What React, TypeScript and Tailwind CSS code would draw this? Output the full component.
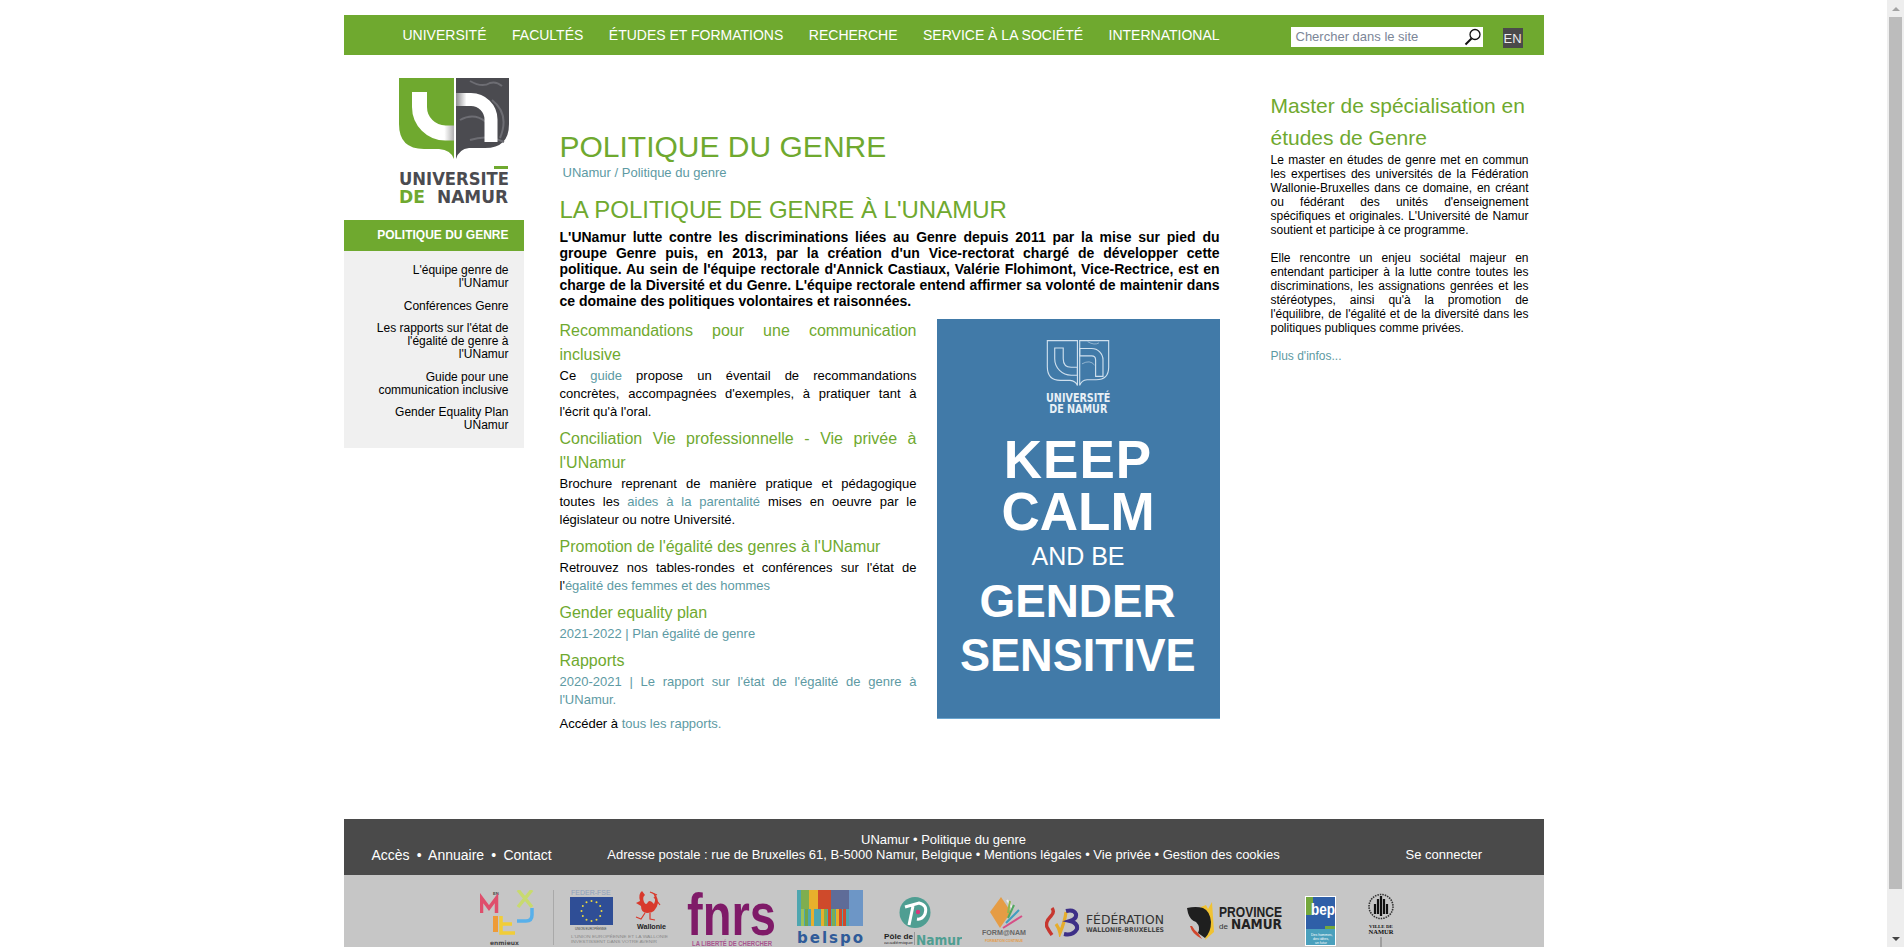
const navItems = ['UNIVERSITÉ', 'FACULTÉS', 'ÉTUDES ET FORMATIONS', 'RECHERCHE', 'SERVICE À LA SOCIÉTÉ', 'INTERNATIONAL']

const sideItems = [
  "L'équipe genre de l'UNamur",
  'Conférences Genre',
  "Les rapports sur l'état de l'égalité de genre à l'UNamur",
  'Guide pour une communication inclusive',
  'Gender Equality Plan UNamur',
]

function Heading({ children }: { children: React.ReactNode }) {
  return <h3 className="text-[16px] leading-[24px] text-[#6fa92f] text-justify">{children}</h3>
}

function Para({ children }: { children: React.ReactNode }) {
  return <p className="text-[13px] leading-[18px] text-black text-justify mb-[6px]">{children}</p>
}

function Link({ children }: { children: React.ReactNode }) {
  return <a className="text-[#5d9aa3]">{children}</a>
}

function UnamurLogo() {
  return (
    <svg width="112" height="127" viewBox="0 0 112 127" className="block">
      <defs>
        <linearGradient id="uFade" x1="0" x2="1" y1="0" y2="0">
          <stop offset="0.72" stopColor="#ffffff" />
          <stop offset="1" stopColor="#b0b0b0" />
        </linearGradient>
        <linearGradient id="nFade" x1="0" x2="1" y1="0" y2="0">
          <stop offset="0" stopColor="#8d8d90" />
          <stop offset="0.3" stopColor="#ffffff" />
        </linearGradient>
      </defs>
      <path d="M1 0H56V81Q53 72 41 71H26Q1 71 1 46Z" fill="#6fa92f" />
      <path d="M58 0H111V46Q111 70 87 70H71Q61 71 58 81Z" fill="#4b4b50" />
      <path d="M72 3Q84 10 92 5Q98 3 104 8M62 42Q76 34 88 44M94 22Q112 36 102 60M72 62Q90 56 106 64" fill="none" stroke="#6d6d73" strokeWidth="2" />
      <path d="M21.5 14V29A26 26 0 0 0 47.5 55H56" fill="none" stroke="url(#uFade)" strokeWidth="15" />
      <path d="M58 21.5H73A20 20 0 0 1 93 41.5V64" fill="none" stroke="url(#nFade)" strokeWidth="13" />
      <rect x="96" y="88" width="14" height="3" fill="#6fa92f" />
      <text x="1" y="107" fontFamily="DejaVu Sans" fontWeight="700" fontSize="17" fill="#4b4b50" textLength="110" lengthAdjust="spacingAndGlyphs">UNIVERSITE</text>
      <text x="1" y="125" fontFamily="DejaVu Sans" fontWeight="700" fontSize="17" fill="#6fa92f" textLength="26" lengthAdjust="spacingAndGlyphs">DE</text>
      <text x="39" y="125" fontFamily="DejaVu Sans" fontWeight="700" fontSize="17" fill="#4b4b50" textLength="71" lengthAdjust="spacingAndGlyphs">NAMUR</text>
    </svg>
  )
}

function Poster() {
  return (
    <div className="w-[283px] h-[400px] shrink-0 bg-[#417aa8] border-b border-[#6aa5cf] flex flex-col items-center text-white overflow-hidden">
      <svg width="66" height="46" viewBox="0 0 110 81" className="mt-[21px] block" fill="none" stroke="#cfe0ee" strokeWidth="2">
        <path d="M1 1H54V80Q51 72 41 71H24Q1 71 1 47Z" />
        <path d="M58 1H109V48Q109 70 87 70H71Q61 71 58 80Z" />
        <path d="M14 14V33A29 29 0 0 0 43 62H54V48H43Q29 48 29 33V14Z" />
        <path d="M58 15H79A20 20 0 0 1 99 35V64H86V35Q86 28 79 28H58Z" />
        <path d="M72 3Q84 10 92 5M62 42Q76 34 84 44" strokeWidth="1" />
      </svg>
      <div className="mt-[7px] text-[12px] leading-[11px] font-bold text-center font-['DejaVu_Sans'] scale-x-[0.8] text-[#e8f0f6]">
        UNIVERSITÉ
        <br />
        DE NAMUR
      </div>
      <div className="mt-[17px] text-[53px] leading-[55px] font-bold tracking-[1px]">KEEP</div>
      <div className="text-[53px] leading-[55px] -mt-[3px] font-bold">CALM</div>
      <div className="text-[25px] leading-[29px] mt-[3px]">AND BE</div>
      <div className="text-[47px] leading-[54px] mt-[3px] font-bold scale-x-[0.975]">GENDER</div>
      <div className="text-[47px] leading-[54px] font-bold scale-x-[0.96] whitespace-nowrap">SENSITIVE</div>
    </div>
  )
}

function MixLogo() {
  return (
    <svg width="56" height="56" viewBox="0 0 56 56" className="block">
      <text x="13" y="5" fontSize="4" fontWeight="700" fill="#444" fontFamily="Liberation Sans">EN</text>
      <path d="M1.5 23V8L9 18L16.5 8V23" fill="none" stroke="#df4f6c" strokeWidth="3.5" />
      <path d="M38 0L52 17M52 0L38 17" stroke="#c8da6e" strokeWidth="3.5" />
      <path d="M37 31H46Q52 31 52 25V18" fill="none" stroke="#58b0ea" strokeWidth="3.5" />
      <rect x="13" y="26" width="5" height="16" fill="#ee9b37" />
      <path d="M21 26V43H35M21 34H32" fill="none" stroke="#f1cd38" strokeWidth="3.5" />
      <text x="10" y="55" fontSize="6" fontWeight="700" fill="#444" fontFamily="DejaVu Sans">enmieux</text>
    </svg>
  )
}

function EuWallonie() {
  const stars = [0, 30, 60, 90, 120, 150, 180, 210, 240, 270, 300, 330]
  return (
    <svg width="99" height="56" viewBox="0 0 99 56" className="block">
      <text x="1" y="6" fontSize="7" fill="#8ea0bb" fontFamily="Liberation Sans">FEDER-FSE</text>
      <rect x="0" y="8" width="43" height="28" fill="#2f4e96" />
      {stars.map(a => (
        <circle
          key={a}
          cx={21.5 + 10 * Math.cos((a * Math.PI) / 180)}
          cy={22 + 10 * Math.sin((a * Math.PI) / 180)}
          r="1"
          fill="#ecd93f"
        />
      ))}
      <text x="5" y="41" fontSize="3" fill="#444" fontFamily="Liberation Sans">UNION EUROPÉENNE</text>
      <path d="M72 2Q68 5 70 12L66 14L71 17Q71 24 77 24Q86 24 88 14Q88 6 82 3Q87 9 84 15Q80 10 78 13Q76 17 74 13Q72 8 75 6Z" fill="#d8392c" />
      <path d="M75 24L71 30L66 28M80 24L80 30L85 31M84 8L90 16M80 3L87 6" fill="none" stroke="#d8392c" strokeWidth="1.2" />
      <text x="67" y="40" fontSize="7" fontWeight="700" fill="#222" fontFamily="Liberation Sans" textLength="29" lengthAdjust="spacingAndGlyphs">Wallonie</text>
      <text x="1" y="49" fontSize="3.7" fill="#8a8a8a" fontFamily="Liberation Sans" textLength="97" lengthAdjust="spacingAndGlyphs">L'UNION EUROPÉENNE ET LA WALLONIE</text>
      <text x="1" y="54" fontSize="3.7" fill="#8a8a8a" fontFamily="Liberation Sans" textLength="86" lengthAdjust="spacingAndGlyphs">INVESTISSENT DANS VOTRE AVENIR</text>
    </svg>
  )
}

function FnrsLogo() {
  return (
    <svg width="90" height="58" viewBox="0 0 90 58" className="block">
      <text x="0" y="46" fontSize="60" fontWeight="700" fill="#7f1a68" fontFamily="Liberation Sans" textLength="89" lengthAdjust="spacingAndGlyphs">fnrs</text>
      <text x="5" y="57" fontSize="6.5" fontWeight="700" fill="#a8558f" fontFamily="Liberation Sans" textLength="80" lengthAdjust="spacingAndGlyphs">LA LIBERTÉ DE CHERCHER</text>
    </svg>
  )
}

function BelspoLogo() {
  const stripes = [
    [4, '#9cc25a'], [8, '#6fa64a'], [14, '#e8b02c'], [19, '#4ea6b0'], [24, '#e8b02c'], [27, '#7fae4f'], [31, '#cf4a2b'], [35, '#7fae4f'], [39, '#e8b02c'], [42, '#cf4a2b'], [46, '#cf4a2b'],
  ] as const
  return (
    <svg width="66" height="56" viewBox="0 0 66 56" className="block">
      <rect x="0" y="0" width="4" height="36" fill="#4ea6b0" />
      <rect x="4" y="0" width="8" height="36" fill="#7fae4f" />
      <rect x="12" y="0" width="9" height="36" fill="#e8b02c" />
      <rect x="21" y="0" width="13" height="36" fill="#cf4a2b" />
      <rect x="34" y="0" width="18" height="36" fill="#5f6c98" />
      <rect x="52" y="0" width="14" height="36" fill="#6d96c6" />
      <rect x="4" y="19" width="48" height="17" fill="#4ea6b0" />
      {stripes.map(([x, color]) => (
        <rect key={x} x={x} y="19" width="3" height="17" fill={color} />
      ))}
      <text x="0" y="53" fontSize="15" fontWeight="700" fill="#2f5b99" fontFamily="DejaVu Sans" textLength="66" lengthAdjust="spacing">belspo</text>
    </svg>
  )
}

function PoleLogo() {
  return (
    <svg width="78" height="50" viewBox="0 0 78 50" className="block">
      <circle cx="31" cy="15.5" r="15.5" fill="#4f9e92" />
      <path d="M21 10L35 6Q44 8 41 17Q38 23 33 22M29 9L25 28" fill="none" stroke="#fff" strokeWidth="3" />
      <circle cx="34" cy="15" r="2.2" fill="#d8387c" />
      <text x="0" y="42" fontSize="7" fontWeight="700" fill="#222" fontFamily="Liberation Sans" textLength="29" lengthAdjust="spacingAndGlyphs">Pôle de</text>
      <text x="0" y="47" fontSize="3.6" fill="#333" fontFamily="Liberation Sans" textLength="29" lengthAdjust="spacingAndGlyphs">académique</text>
      <rect x="30" y="35" width="0.6" height="13" fill="#777" />
      <text x="32" y="48" fontSize="14" fontWeight="700" fill="#4f9e92" fontFamily="DejaVu Sans" textLength="46" lengthAdjust="spacingAndGlyphs">Namur</text>
    </svg>
  )
}

function FormanamLogo() {
  return (
    <svg width="44" height="47" viewBox="0 0 44 47" className="block">
      <path d="M19 0L29 15L18 31L8 15Z" fill="#e59c45" />
      <path d="M25 3L31 12" stroke="#eeeeee" strokeWidth="2" />
      <path d="M28 4L26 16" stroke="#8fb84d" strokeWidth="2" />
      <path d="M32 8L26 21" stroke="#50a860" strokeWidth="2" />
      <path d="M37 13L24 26" stroke="#3f9ec0" strokeWidth="2" />
      <path d="M40 19L21 31" stroke="#d64f86" strokeWidth="2" />
      <text x="0" y="38" fontSize="6.5" fontWeight="700" fill="#666" fontFamily="Liberation Sans" textLength="44" lengthAdjust="spacingAndGlyphs">FORM@NAM</text>
      <text x="3" y="45" fontSize="3.5" fontWeight="700" fill="#e59c45" fontFamily="Liberation Sans" textLength="38" lengthAdjust="spacingAndGlyphs">FORMATION CONTINUE</text>
    </svg>
  )
}

function FederationLogo() {
  return (
    <svg width="120" height="32" viewBox="0 0 120 32" className="block">
      <path d="M7 3Q10 7 6 11Q0 17 2 22Q4 26 7 30" fill="none" stroke="#c7372f" strokeWidth="3.4" />
      <path d="M11 19Q14 23 15 28Q20 16 21 7" fill="none" stroke="#e6ad2b" strokeWidth="3.2" />
      <path d="M21 6Q29 4 31 9Q32 14 25 16Q33 18 32 24Q28 31 19 29" fill="none" stroke="#3d2f87" strokeWidth="4" />
      <text x="41" y="19" fontSize="12" fill="#333" fontFamily="DejaVu Sans" textLength="78" lengthAdjust="spacingAndGlyphs">FÉDÉRATION</text>
      <text x="41" y="27" fontSize="6.5" fontWeight="700" fill="#444" fontFamily="DejaVu Sans" textLength="78" lengthAdjust="spacingAndGlyphs">WALLONIE-BRUXELLES</text>
    </svg>
  )
}

function ProvinceLogo() {
  return (
    <svg width="97" height="42" viewBox="0 0 97 42" className="block">
      <path d="M12 2L15 7L20 5L22 9L26 2L28 32L19 40L23 22Z" fill="#f0c232" />
      <path d="M1 8Q10 6 17 8Q24 11 25 22Q25 32 19 38L12 33Q15 27 10 22Q4 20 2 13Z" fill="#1f1f1f" />
      <path d="M4 26Q6 34 16 39L12 33Q8 30 6 26Z" fill="#d1462c" />
      <text x="33" y="17" fontSize="14" fontWeight="700" fill="#222" fontFamily="Liberation Sans" textLength="63" lengthAdjust="spacingAndGlyphs">PROVINCE</text>
      <text x="33" y="29" fontSize="8" fill="#333" fontFamily="Liberation Sans">de</text>
      <text x="45" y="29" fontSize="14" fontWeight="700" fill="#222" fontFamily="DejaVu Sans" textLength="51" lengthAdjust="spacingAndGlyphs">NAMUR</text>
    </svg>
  )
}

function BepLogo() {
  return (
    <svg width="31" height="50" viewBox="0 0 31 50" className="block">
      <rect width="31" height="50" fill="#fff" />
      <rect x="1" y="1" width="29" height="18" fill="#2f5fa8" />
      <rect x="1" y="1" width="7" height="18" fill="#74a83c" />
      <rect x="1" y="19" width="29" height="14" fill="#2f5fa8" />
      <rect x="20" y="30" width="10" height="3" fill="#74a83c" />
      <rect x="1" y="33" width="29" height="16" fill="#4aa0bd" />
      <text x="6" y="19" fontSize="17" fontWeight="700" fill="#fff" fontFamily="Liberation Sans" textLength="24" lengthAdjust="spacingAndGlyphs">bep</text>
      <text x="6" y="40" fontSize="3.5" fill="#fff" fontFamily="Liberation Sans">Des hommes,</text>
      <text x="8" y="44" fontSize="3.5" fill="#fff" fontFamily="Liberation Sans">des idées,</text>
      <text x="10" y="48" fontSize="3.5" fill="#fff" fontFamily="Liberation Sans">un futur</text>
    </svg>
  )
}

function VilleLogo() {
  return (
    <svg width="28" height="54" viewBox="0 0 28 54" className="block">
      <circle cx="14" cy="13.5" r="12" fill="none" stroke="#333" strokeWidth="1.6" strokeDasharray="1.5 1" />
      <path d="M8 21V11M11 21V6M14 23V3M17 21V6M20 21V11" stroke="#111" strokeWidth="2.2" />
      <text x="14" y="35" textAnchor="middle" fontSize="5" fontWeight="700" fontFamily="Liberation Serif" fill="#111">VILLE DE</text>
      <text x="14" y="41" textAnchor="middle" fontSize="6.5" fontWeight="700" fontFamily="Liberation Serif" fill="#111">NAMUR</text>
      <path d="M14 44V54" stroke="#777" strokeWidth="1" />
    </svg>
  )
}

export default function App() {
  return (
    <div className="h-[947px] flex overflow-hidden bg-white font-['Liberation_Sans',Arial,sans-serif]">
      <div className="flex-1 min-w-0 pt-[15px]">
        <div className="w-[1200px] mx-auto">
          {/* Top nav */}
          <div className="h-[40px] bg-[#6fa92f] flex items-center text-white">
            <div className="flex gap-[25.5px] pl-[59px] text-[14px] leading-[40px] flex-1">
              {navItems.map(item => (
                <a key={item}>{item}</a>
              ))}
            </div>
            <div className="w-[192px] h-[20px] mt-[4px] bg-white flex items-center justify-between pl-[5px] pr-[1px] text-[13px] text-[#7c8698]">
              <span>Chercher dans le site</span>
              <svg width="18" height="18" viewBox="0 0 18 18" fill="none" stroke="#111">
                <circle cx="11" cy="6.5" r="5" strokeWidth="1.3" />
                <path d="M7.5 10.5L1.5 16.5" strokeWidth="2" />
              </svg>
            </div>
            <div className="ml-[20px] mr-[21px] w-[20px] h-[20px] mt-[6px] bg-[#4a4a4a] text-[#eeeeee] text-[13px] leading-[21px] text-center">EN</div>
          </div>

          <div className="flex">
            {/* Left sidebar */}
            <div className="w-[180px] shrink-0 pt-[23px]">
              <div className="pl-[54px]">
                <UnamurLogo />
              </div>
              <div className="mt-[15px] h-[31px] bg-[#6fa92f] text-white text-[12px] font-bold leading-[30px] text-right pr-[15px]">POLITIQUE DU GENRE</div>
              <div className="bg-[#f0f0f0] h-[197px] pt-[13px] pr-[15px] pl-[30px] text-right text-[12px] leading-[13px] text-black flex flex-col gap-[9.5px]">
                {sideItems.map(item => (
                  <a key={item} className="block">{item}</a>
                ))}
              </div>
            </div>

            {/* Main column */}
            <div className="w-[660px] shrink-0 ml-[36px] pt-[74px]">
              <h1 className="text-[30px] leading-[36px] text-[#6fa92f]">POLITIQUE DU GENRE</h1>
              <div className="pl-[3px] text-[13px] leading-[15px] text-[#5d9aa3]">UNamur / Politique du genre</div>
              <h2 className="mt-[16px] text-[24px] leading-[28px] text-[#6fa92f]">LA POLITIQUE DE GENRE À L'UNAMUR</h2>
              <p className="mt-[5px] text-[14px] leading-[16px] font-bold text-black text-justify">
                L'UNamur lutte contre les discriminations liées au Genre depuis 2011 par la mise sur pied du groupe Genre puis, en 2013, par la création d'un Vice-rectorat chargé de développer cette politique. Au sein de l'équipe rectorale d'Annick Castiaux, Valérie Flohimont, Vice-Rectrice, est en charge de la Diversité et du Genre. L'équipe rectorale entend affirmer sa volonté de maintenir dans ce domaine des politiques volontaires et raisonnées.
              </p>
              <div className="flex justify-between mt-[10px]">
                <div className="w-[357px]">
                  <Heading>Recommandations pour une communication inclusive</Heading>
                  <Para>
                    Ce <Link>guide</Link> propose un éventail de recommandations concrètes, accompagnées d'exemples, à pratiquer tant à l'écrit qu'à l'oral.
                  </Para>
                  <Heading>Conciliation Vie professionnelle - Vie privée à l'UNamur</Heading>
                  <Para>
                    Brochure reprenant de manière pratique et pédagogique toutes les <Link>aides à la parentalité</Link> mises en oeuvre par le législateur ou notre Université.
                  </Para>
                  <Heading>Promotion de l'égalité des genres à l'UNamur</Heading>
                  <Para>
                    Retrouvez nos tables-rondes et conférences sur l'état de l'<Link>égalité des femmes et des hommes</Link>
                  </Para>
                  <Heading>Gender equality plan</Heading>
                  <Para>
                    <Link>2021-2022 | Plan égalité de genre</Link>
                  </Para>
                  <Heading>Rapports</Heading>
                  <Para>
                    <Link>2020-2021 | Le rapport sur l'état de l'égalité de genre à l'UNamur.</Link>
                  </Para>
                  <Para>
                    Accéder à <Link>tous les rapports.</Link>
                  </Para>
                </div>
                <Poster />
              </div>
            </div>

            {/* Right column */}
            <div className="w-[258px] shrink-0 ml-[51px] pt-[35px]">
              <h3 className="text-[21px] leading-[32px] text-[#6fa92f]">Master de spécialisation en études de Genre</h3>
              <p className="-mt-[1px] text-[12px] leading-[14px] text-black text-justify mb-[14px]">
                Le master en études de genre met en commun les expertises des universités de la Fédération Wallonie-Bruxelles dans ce domaine, en créant ou fédérant des unités d'enseignement spécifiques et originales. L'Université de Namur soutient et participe à ce programme.
              </p>
              <p className="text-[12px] leading-[14px] text-black text-justify mb-[8px]">
                Elle rencontre un enjeu sociétal majeur en entendant participer à la lutte contre toutes les discriminations, les assignations genrées et les stéréotypes, ainsi qu'à la promotion de l'équilibre, de l'égalité et de la diversité dans les politiques publiques comme privées.
              </p>
              <a className="text-[12px] leading-[14px] text-[#5d9aa3]">Plus d'infos...</a>
            </div>
          </div>

          {/* Footer */}
          <div className="mt-[80px] h-[56px] bg-[#4a4a4a] text-white flex">
            <div className="w-[240px] pl-[28px] pt-[28px] text-[14px] leading-[16px] whitespace-pre [word-spacing:-0.3px]">Accès  •  Annuaire  •  Contact</div>
            <div className="flex-1 pt-[13px] text-center text-[13px] leading-[15px]">
              <div>UNamur • Politique du genre</div>
              <div className="whitespace-nowrap">Adresse postale : rue de Bruxelles 61, B-5000 Namur, Belgique • Mentions légales • Vie privée • Gestion des cookies</div>
            </div>
            <div className="w-[240px] pl-[102px] pt-[28px] text-[13px] leading-[15px]">Se connecter</div>
          </div>
          <div className="h-[80px] bg-[#c6c6c6] flex items-start pt-[14px] pl-[136px]">
            <div className="mt-[1px]"><MixLogo /></div>
            <div className="ml-[17px] mt-[1px] w-px h-[55px] bg-[#a9a9a9]" />
            <div className="ml-[16px]"><EuWallonie /></div>
            <div className="ml-[18px]"><FnrsLogo /></div>
            <div className="ml-[20px] mt-[1px]"><BelspoLogo /></div>
            <div className="ml-[21px] mt-[8px]"><PoleLogo /></div>
            <div className="ml-[20px] mt-[8px]"><FormanamLogo /></div>
            <div className="ml-[19px] mt-[16px]"><FederationLogo /></div>
            <div className="ml-[21px] mt-[11px]"><ProvinceLogo /></div>
            <div className="ml-[22px] mt-[7px]"><BepLogo /></div>
            <div className="ml-[31px] mt-[4px]"><VilleLogo /></div>
          </div>
        </div>
      </div>

      {/* Window scrollbar */}
      <div className="w-[17px] shrink-0 bg-[#eeeeee] flex flex-col items-center">
        <div className="h-[17px] flex items-center justify-center">
          <div className="w-0 h-0 border-x-[4px] border-x-transparent border-b-[4px] border-b-[#a3a3a3]" />
        </div>
        <div className="w-[13px] h-[872px] bg-[#bcbcbc]" />
        <div className="mt-auto h-[17px] flex items-center justify-center">
          <div className="w-0 h-0 border-x-[4px] border-x-transparent border-t-[4px] border-t-[#444444]" />
        </div>
      </div>
    </div>
  )
}
